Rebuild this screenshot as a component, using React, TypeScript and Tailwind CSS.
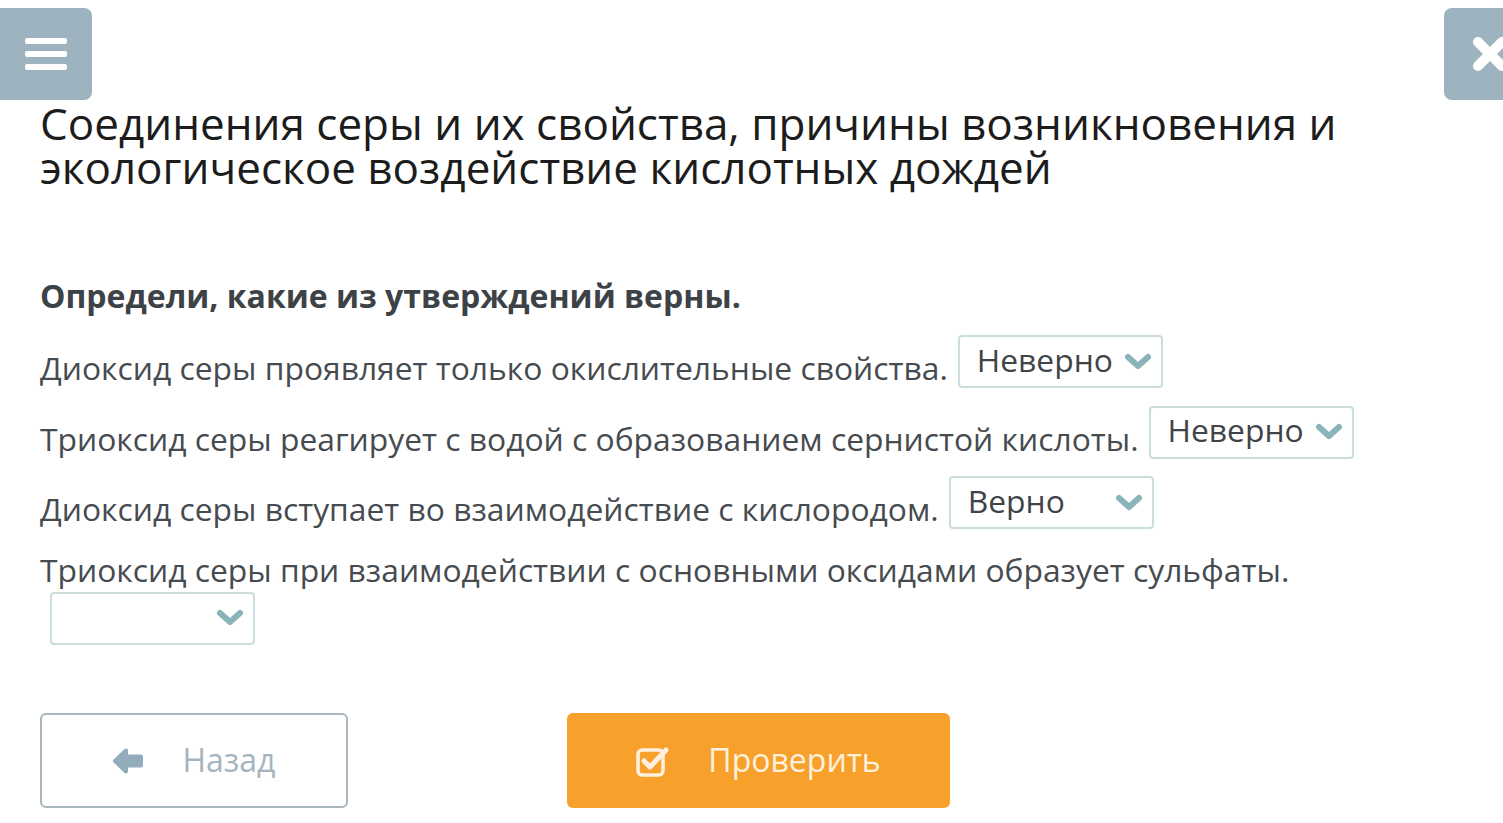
import React from "react";

const FONT = { fontFamily: '"Open Sans", "Noto Sans", sans-serif' };

const STATEMENTS = [
  { text: "Диоксид серы проявляет только окислительные свойства.", value: "Неверно" },
  { text: "Триоксид серы реагирует с водой с образованием сернистой кислоты.", value: "Неверно" },
  { text: "Диоксид серы вступает во взаимодействие с кислородом.", value: "Верно" },
  { text: "Триоксид серы при взаимодействии с основными оксидами образует сульфаты.", value: "" },
];

function Chevron() {
  return (
    <svg width="30" height="20" viewBox="0 0 30 20" aria-hidden="true">
      <polyline
        points="5,5 15,14 25,5"
        fill="none"
        stroke="#89b4ba"
        strokeWidth="6"
        strokeLinecap="round"
        strokeLinejoin="round"
      />
    </svg>
  );
}

function Select({ value }: { value: string }) {
  return (
    <span className="ml-[10px] inline-flex h-[53px] w-[205px] items-center justify-between rounded-[4px] border-2 border-[#cadcdc] bg-white pl-[17px] pr-[8px] align-[6px] leading-none text-[#3f4448]">
      <span className="relative -top-[2px]">{value || "\u00a0"}</span>
      <Chevron />
    </span>
  );
}

export default function App() {
  return (
    <div className="min-h-screen w-full overflow-hidden bg-white" style={FONT}>
      {/* top bar */}
      <div className="flex justify-between pt-[8px]">
        <button
          type="button"
          className="flex h-[92px] w-[92px] flex-col items-center justify-center gap-[7px] rounded-r-[8px] bg-[#9db4c0]"
        >
          <span className="h-[6px] w-[42px] rounded-[2px] bg-white" />
          <span className="h-[6px] w-[42px] rounded-[2px] bg-white" />
          <span className="h-[6px] w-[42px] rounded-[2px] bg-white" />
        </button>
        <button
          type="button"
          className="-mr-[33px] flex h-[92px] w-[92px] items-center justify-center rounded-l-[8px] bg-[#9db4c0]"
        >
          <svg width="38" height="38" viewBox="0 0 38 38" aria-hidden="true">
            <path d="M7 7 L31 31 M31 7 L7 31" stroke="white" strokeWidth="10" strokeLinecap="round" />
          </svg>
        </button>
      </div>

      <div className="px-[40px]">
        <h1 className="mt-[1px] text-[44px] font-normal leading-[44px] text-[#1c1c1c]">
          Соединения серы и их свойства, причины возникновения и
          <br />
          экологическое воздействие кислотных дождей
        </h1>

        <p className="mt-[84px] text-[32px] font-bold leading-[45px] text-[#3d4247]">
          Определи, какие из утверждений верны.
        </p>

        <div className="mt-[17px] flex flex-col gap-[16px] text-[31.8px] leading-[45px] text-[#464b50]">
          {STATEMENTS.map((s, i) => (
            <div key={i}>
              {s.text}
              <Select value={s.value} />
            </div>
          ))}
        </div>

        <div className="mt-[67px] flex gap-[219px]">
          <button
            type="button"
            className="flex h-[95px] w-[308px] items-center justify-center gap-[38px] rounded-[6px] border-2 border-[#aab6bd] bg-white text-[32px] text-[#a5b5c0]"
          >
            <svg width="32" height="28" viewBox="0 0 32 28" aria-hidden="true">
              <path
                d="M3 14 L14 3.5 L14 9.5 L29 9.5 L29 18.5 L14 18.5 L14 24.5 Z"
                fill="#93acbb"
                stroke="#93acbb"
                strokeWidth="4"
                strokeLinejoin="round"
              />
            </svg>
            <span className="relative -top-[1px]">Назад</span>
          </button>
          <button
            type="button"
            className="flex h-[95px] w-[383px] items-center justify-center gap-[38px] rounded-[6px] bg-[#f7a02b] text-[32px] text-[#fdf1de]"
          >
            <svg width="34" height="32" viewBox="0 0 34 32" aria-hidden="true">
              <rect x="2" y="5" width="25" height="25" rx="4" fill="none" stroke="#fdf1de" strokeWidth="3.5" />
              <polyline
                points="8,16 14,22 30,5"
                fill="none"
                stroke="#fdf1de"
                strokeWidth="5"
                strokeLinecap="round"
                strokeLinejoin="round"
              />
            </svg>
            <span className="relative -top-[1px]">Проверить</span>
          </button>
        </div>
      </div>
    </div>
  );
}
